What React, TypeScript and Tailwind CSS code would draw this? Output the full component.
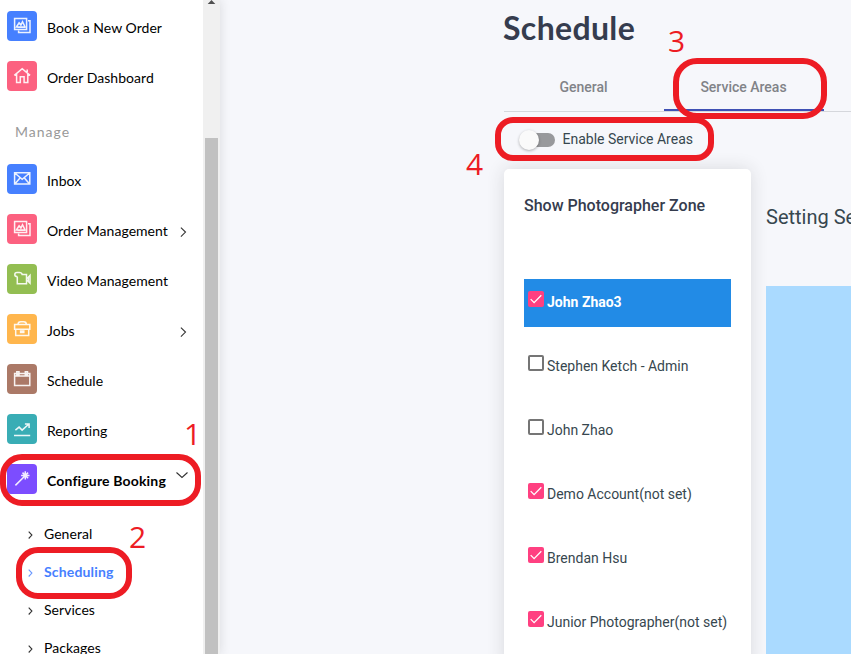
import type { ReactNode } from "react";

const icons: Record<string, ReactNode> = {
  images: (
    <>
      <path d="M7.6 7.6h12v10.8h-12z" />
      <path d="M21 9.8h2v11.6H11.6v-2M9.4 16l2.7-4.2 1.8 2.2 1.6-3.3 2.6 5.3zM10.5 16.2h7.5" />
    </>
  ),
  home: <path d="M7.3 14.4 15.2 7.7l7.9 6.7M9.6 13v8.4h3.7v-5.7h3.8v5.7h3.7V13M20.2 8.5v2.5" />,
  mail: <path d="M7.6 8.8h15.2v11.2H7.6zM7.8 9l7.4 6.3L22.6 9M7.8 20l5.2-6M22.6 20l-5.2-6" />,
  video: <path d="M10.3 12.6v7.2h9.2V10.6h-4.3c-.3-1.6-1.5-2-3-2H10c-1.5 0-2.2.8-2.2 2.1 0 1.3.8 1.9 2.5 1.9M19.5 13.9h1.1l2.4-2.5v7.8l-2.4-2.5h-1.1M21.3 13.5v3.5" />,
  briefcase: <path d="M7.6 10.6h15.2v4.6H7.6zM8.7 15.2v6.2h13v-6.2M11 10.4c0-1.7 1.2-2.6 2.8-2.6h2.8c1.6 0 2.8.9 2.8 2.6M13.6 16.9h3.2v1.5h-3.2z" />,
  calendar: <path d="M7.6 9.5h15.2v12H7.6zM7.6 12h15.2M9.8 7.7h2.2v3H9.8zM18.3 7.7h2.2v3h-2.2z" />,
  chart: <path d="M7 21.5h16.2M8.4 16.1l3.7-3 3 3 6.3-5.6M17.9 9.9h4.2v4" />,
  wand: <path d="m8.4 21.4 8.7-8.7M18.3 7.2v8.4M14.1 11.4h8.4M15.5 8.6l5.6 5.6M21.1 8.6l-5.6 5.6" />,
};

function Tile({ icon, color }: { icon: string; color: string }) {
  return (
    <span className={`flex size-[30px] shrink-0 rounded ${color}`}>
      <svg viewBox="0 0 30 30" className="size-[30px] fill-none stroke-white/90" strokeWidth={1.5}>
        {icons[icon]}
      </svg>
    </span>
  );
}

type Item = { label: string; icon: string; color: string; more?: boolean; open?: boolean };

function NavItem({ label, icon, color, more, open }: Item) {
  return (
    <a className="flex h-[50px] items-start pl-[7px]">
      <Tile icon={icon} color={color} />
      <span className={`ml-2.5 mt-[7px] whitespace-nowrap text-[14px] leading-5 ${open ? "font-bold tracking-[0.16px]" : "tracking-[0.04px]"}`}>{label}</span>
      {(more || open) && (
        <svg viewBox="0 0 12 12" className={`ml-auto size-3 fill-none stroke-[#333] ${open ? "mr-[15px] mt-[5px] rotate-90" : "mr-[14px] mt-[12px]"}`} strokeWidth={1.1}>
          {open ? <path d="m3.5.5 5 5.5-5 5.5" /> : <path d="m3.9 1.6 4.6 4.5-4.6 4.5" />}
        </svg>
      )}
    </a>
  );
}

const main: Item[] = [
  { label: "Book a New Order", icon: "images", color: "bg-[#4680ff]" },
  { label: "Order Dashboard", icon: "home", color: "bg-[#fc6180]" },
];
const manage: Item[] = [
  { label: "Inbox", icon: "mail", color: "bg-[#4680ff]" },
  { label: "Order Management", icon: "images", color: "bg-[#fc6180]", more: true },
  { label: "Video Management", icon: "video", color: "bg-[#93be52]" },
  { label: "Jobs", icon: "briefcase", color: "bg-[#ffb64d]", more: true },
  { label: "Schedule", icon: "calendar", color: "bg-[#ab7967]" },
  { label: "Reporting", icon: "chart", color: "bg-[#39adb5]" },
  { label: "Configure Booking", icon: "wand", color: "bg-[#7c4dff]", open: true },
];
const people = [
  { name: "John Zhao3", on: true, active: true },
  { name: "Stephen Ketch - Admin", on: false },
  { name: "John Zhao", on: false },
  { name: "Demo Account(not set)", on: true },
  { name: "Brendan Hsu", on: true },
  { name: "Junior Photographer(not set)", on: true },
];

function Sidebar() {
  return (
    <nav className="h-full w-[203px] shrink-0 overflow-hidden bg-white pt-[11px] font-['Lato',sans-serif] text-black">
      {main.map((i) => <NavItem key={i.label} {...i} />)}
      <div className="h-[53px] pl-[15px] pt-[11px] text-[14px] leading-5 tracking-[1px] text-[#999]">Manage</div>
      {manage.map((i) => <NavItem key={i.label} {...i} />)}
      <ul>
        {["General", "Scheduling", "Services", "Packages"].map((s) => (
          <li key={s} className={`flex h-[38.2px] items-center pl-[26px] text-[14px] ${s === "Scheduling" ? "font-bold tracking-[0.16px] text-[#4680ff]" : "tracking-[0.04px]"}`}>
            <svg viewBox="0 0 8 10" className="mr-[10px] mt-[3px] h-[10px] w-2 fill-none stroke-current opacity-80" strokeWidth={1.1}>
              <path d="m2.7 1.7 3.2 3.4-3.2 3.4" />
            </svg>
            {s}
          </li>
        ))}
      </ul>
    </nav>
  );
}

function Checkbox({ on }: { on: boolean }) {
  return on ? (
    <span className="size-4 shrink-0 rounded-[2px] bg-[#ff4081]">
      <svg viewBox="0 0 16 16" className="size-4 fill-none stroke-white" strokeWidth={1.3}><path d="m2.7 8.1 3.4 3.5 7.2-7.4" /></svg>
    </span>
  ) : (
    <span className="size-4 shrink-0 rounded-[2px] border-2 border-[#757575]" />
  );
}

function Schedule() {
  return (
    <main className="min-w-0 flex-1 overflow-hidden pl-[284px] pt-[8px] text-[#37474f]">
      <h1 className="-ml-px h-[55px] font-['Lato',sans-serif] text-[32px] font-bold leading-10 tracking-[0.35px] text-[#353c4e]">Schedule</h1>
      <div className="flex h-[49px] border-b border-[#d5d7dc] text-[14px] font-medium text-[#818388]">
        <div className="flex h-[48px] w-40 items-center justify-center pr-px">General</div>
        <div className="flex h-[48px] w-40 items-center justify-center border-b-2 border-[#3f51b5] pr-px pt-0.5">Service Areas</div>
      </div>
      <div className="flex h-[57px] items-start pl-4 pt-[17px]">
        <span className="mt-[4px] flex h-[14px] w-[35px] items-center rounded-full bg-[#98999c]">
          <span className="-ml-px size-5 rounded-full bg-[#fafafa] shadow-[0_1px_3px_rgba(0,0,0,0.3)]" />
        </span>
        <span className="ml-[7.5px] text-[14px] leading-5">Enable Service Areas</span>
      </div>
      <div className="flex h-[500px] w-[600px] items-start">
        <section className="h-full w-[247px] shrink-0 rounded-t-[5px] bg-white px-5 shadow-[0_0_18px_rgba(43,43,43,0.14)]">
          <h2 className="h-[110px] pt-[25px] text-[16px] font-medium leading-6 text-[#353c4e]">Show Photographer Zone</h2>
          {people.map((p) => (
            <div key={p.name} className={`mb-4 flex h-12 items-start gap-[3px] pl-1 ${p.active ? "bg-[#228be6]" : ""}`}>
              <span className="mt-3 flex"><Checkbox on={p.on} /></span>
              <span className={`mt-[13px] whitespace-nowrap text-[14px] leading-5 ${p.active ? "font-bold text-white" : ""}`}>{p.name}</span>
            </div>
          ))}
        </section>
        <section className="ml-[15px] min-w-0 flex-1">
          <p className="h-[117px] whitespace-nowrap pt-[33px] text-[20px] leading-[30px]">Setting Service Areas</p>
          <div className="h-[400px] bg-[#aadaff]" />
        </section>
      </div>
    </main>
  );
}

export default function App() {
  return (
    <div className="relative flex h-[654px] w-[851px] overflow-hidden bg-[#f6f7fb] font-['Roboto',sans-serif]">
      <div className="z-10 flex h-full shadow-[0_0_10px_rgba(43,43,43,0.14)]">
        <Sidebar />
        <div className="flex w-[17px] flex-col bg-[#f0f0f0] px-0.5">
          <svg viewBox="0 0 13 138" className="h-[138px] w-[13px] shrink-0 fill-[#505050]"><path d="m6.5 0 3.8 4H2.7z" /></svg>
          <div className="w-[13px] flex-1 bg-[#c1c1c1]" />
        </div>
      </div>
      <Schedule />
      <div className="pointer-events-none absolute inset-0 z-20 font-['Open_Sans',sans-serif] text-[30px] font-normal leading-none text-[#ed1c24]">
        <div className="absolute left-0 top-[454px] h-[52px] w-[201px] rounded-[22px] border-[6px] border-[#ed1c24]" />
        <div className="absolute left-[16px] top-[547px] h-[52px] w-[116px] rounded-[22px] border-[6px] border-[#ed1c24]" />
        <div className="absolute left-[673px] top-[58px] h-[61px] w-[154px] rounded-[24px] border-[6px] border-[#ed1c24]" />
        <div className="absolute left-[495px] top-[117px] h-[44px] w-[219px] rounded-[18px] border-[6px] border-[#ed1c24]" />
        <span className="absolute left-[184px] top-[419px]">1</span>
        <span className="absolute left-[129px] top-[522px]">2</span>
        <span className="absolute left-[668px] top-[26px]">3</span>
        <span className="absolute left-[466px] top-[149px]">4</span>
      </div>
    </div>
  );
}
